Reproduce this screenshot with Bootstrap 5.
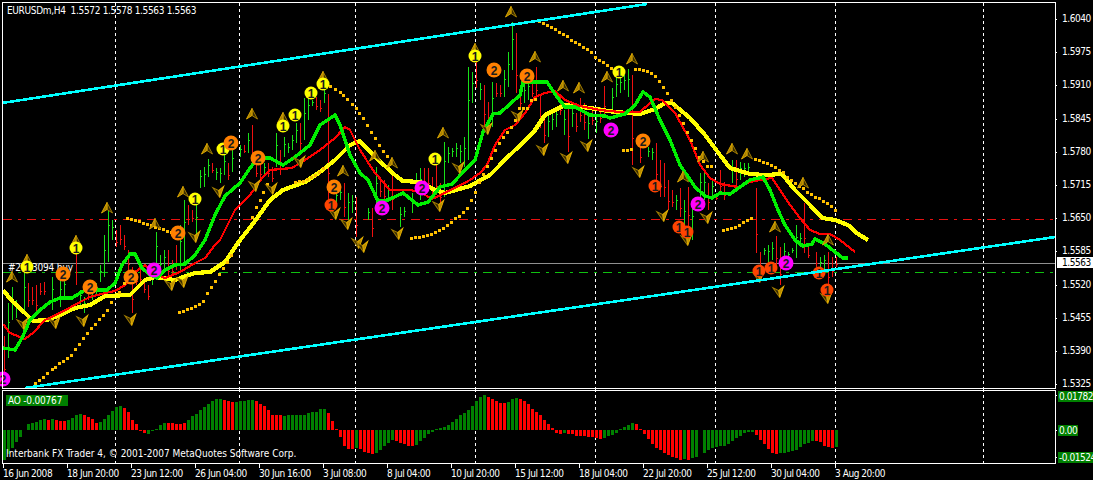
<!DOCTYPE html>
<html lang="en">
<head>
<meta charset="utf-8">
<title>EURUSDm,H4</title>
<link href="https://cdn.jsdelivr.net/npm/bootstrap@5.3.0/dist/css/bootstrap.min.css" rel="stylesheet">
<style>
html,body{margin:0;padding:0;background:#000;overflow:hidden}
.mt4-win{width:1093px;height:480px;background:#000;color:#fff;font-family:"DejaVu Sans Condensed","DejaVu Sans","Liberation Sans",sans-serif;font-stretch:condensed;font-size:10px;line-height:11px;letter-spacing:-.45px;overflow:hidden}
.mt4-win svg{display:block;flex:0 0 1057px}
.pane-main{height:389px}
.pane-ao{height:75px}
.scale-prices{width:36px;padding:13px 0 0 5px;gap:22.2px}
.scale-prices span{height:11px;white-space:nowrap}
.scale-ao{width:36px}
.ao-tag{position:absolute;left:1px;background:#008000;padding:0 1px;height:11px;white-space:nowrap}
.ao-t1{top:2px}.ao-t2{top:36px}.ao-t3{top:63px}
.cur-price{position:absolute;left:1057px;top:257px;width:36px;height:11px;background:#fff;color:#000;padding-left:5px}
.sym-title{position:absolute;left:7px;top:5px;white-space:pre;letter-spacing:-.33px}
.ao-name{position:absolute;left:6px;top:6px;width:62px;height:11px;background:#008000;padding-left:2px;white-space:nowrap;letter-spacing:-.2px}
.copyr{position:absolute;left:6px;top:59px;white-space:nowrap;letter-spacing:0}
.axis-time{padding:4px 0 0 3px;height:16px}
.tick-lbl{flex:0 0 64px;position:relative;white-space:nowrap}
.tick-lbl::before{content:"";position:absolute;left:0;top:-4px;width:1px;height:4px;background:#fff}
.digit{font:700 12px "Liberation Sans",sans-serif;fill:#1c1c1c;text-anchor:middle;letter-spacing:0}
.svg-lbl{fill:#fff;letter-spacing:-.2px}
</style>
</head>
<body>
<div class="mt4-win d-flex flex-column">
  <div class="pane-main d-flex position-relative">
    <svg id="plot" width="1057" height="389" viewBox="0 0 1057 389" aria-label="price chart"></svg>
    <div class="scale-prices d-flex flex-column">
      <span>1.6040</span><span>1.5975</span><span>1.5910</span><span>1.5845</span><span>1.5780</span><span>1.5715</span>
      <span>1.5650</span><span>1.5585</span><span>1.5520</span><span>1.5455</span><span>1.5390</span><span>1.5325</span>
    </div>
    <div class="cur-price">1.5563</div>
    <div class="sym-title">EURUSDm,H4  1.5572 1.5578 1.5563 1.5563</div>
  </div>
  <div class="pane-ao d-flex position-relative">
    <svg id="ao" width="1057" height="75" viewBox="0 0 1057 75" aria-label="AO"></svg>
    <div class="scale-ao position-relative">
      <span class="ao-tag ao-t1">0.01782</span><span class="ao-tag ao-t2">0.00</span><span class="ao-tag ao-t3">-0.01524</span>
    </div>
    <div class="ao-name">AO -0.00767</div>
    <div class="copyr">Interbank FX Trader 4, © 2001-2007 MetaQuotes Software Corp.</div>
  </div>
  <div class="axis-time d-flex">
    <span class="tick-lbl">16 Jun 2008</span><span class="tick-lbl">18 Jun 20:00</span><span class="tick-lbl">23 Jun 12:00</span><span class="tick-lbl">26 Jun 04:00</span><span class="tick-lbl">30 Jun 16:00</span><span class="tick-lbl">3 Jul 08:00</span><span class="tick-lbl">8 Jul 04:00</span><span class="tick-lbl">10 Jul 20:00</span><span class="tick-lbl">15 Jul 12:00</span><span class="tick-lbl">18 Jul 04:00</span><span class="tick-lbl">22 Jul 20:00</span><span class="tick-lbl">25 Jul 12:00</span><span class="tick-lbl">30 Jul 04:00</span><span class="tick-lbl">3 Aug 20:00</span>
  </div>
</div>
<script src="https://cdn.jsdelivr.net/npm/bootstrap@5.3.0/dist/js/bootstrap.bundle.min.js"></script>
<script>
const VX=[115.5,239.5,355.5,475.5,595.5,715.5,835.5,983.5];
const candles=`4 r 336 383;8 g 303 358;12 g 287 320;16 g 300 318;24 g 273 312;28 r 283 307;32 r 287 305;36 r 285 313;40 r 283 295;44 r 282 295;52 g 277 310;60 g 280 307;64 g 275 300;76 r 240 285;80 g 290 305;84 g 297 313;88 r 285 300;92 g 285 300;96 g 283 295;100 g 265 282;104 g 235 277;108 g 205 262;112 g 220 240;116 r 230 247;120 r 225 245;124 r 235 250;128 r 250 270;132 r 267 313;136 r 270 285;140 r 265 285;144 r 280 293;148 r 285 300;152 g 270 285;156 g 232 272;160 g 255 280;164 g 250 270;168 r 250 280;172 r 260 275;176 r 245 270;180 g 225 270;184 g 200 263;188 r 205 225;192 r 210 222;196 g 205 240;200 g 170 188;204 g 167 187;208 g 159 177;212 r 163 173;216 g 168 180;220 g 168 183;224 g 153 175;228 r 163 180;232 g 150 172;240 g 145 157;244 r 145 153;248 g 133 153;252 r 125 163;256 r 163 177;260 r 165 178;264 g 163 175;268 r 163 177;272 r 167 182;276 g 133 167;280 r 150 175;284 g 137 157;288 g 143 153;292 g 135 150;296 g 123 143;300 r 123 152;304 g 98 140;308 g 97 120;312 g 100 106;316 r 97 110;320 r 100 112;324 g 88 103;328 r 94 207;336 g 190 203;340 g 188 200;344 r 183 217;348 g 193 220;352 g 195 213;356 r 197 237;368 g 208 220;372 r 208 237;376 g 167 213;380 r 177 197;384 r 180 203;388 g 185 200;392 r 173 210;400 g 207 227;404 g 207 217;412 g 193 213;416 g 173 193;420 g 168 200;424 r 168 187;428 r 168 190;432 r 177 197;436 r 165 195;440 r 183 203;444 g 142 197;448 g 147 163;452 g 148 157;456 g 143 157;460 g 145 163;464 g 137 167;468 g 67 160;472 g 72 103;476 r 60 88;480 g 83 100;484 r 85 127;488 r 102 123;492 g 82 127;496 r 83 97;500 r 85 97;504 g 70 97;508 g 52 87;512 g 22 70;516 r 33 93;520 r 87 110;524 g 83 103;528 g 78 100;532 r 82 97;536 r 67 100;540 r 95 128;544 r 115 143;548 g 113 137;552 g 113 130;556 g 107 127;560 r 97 115;564 g 110 135;568 r 100 152;572 g 105 127;576 r 113 132;580 r 98 122;584 r 103 130;588 g 115 139;592 r 108 125;596 g 115 133;600 r 107 123;604 r 86 115;612 g 88 113;616 g 77 97;620 g 76 93;624 g 75 90;628 g 69 97;632 r 75 165;640 r 143 163;648 g 147 157;652 g 148 160;656 r 143 187;660 r 160 197;664 r 163 197;668 r 180 210;672 r 190 207;676 g 195 210;680 r 188 217;684 g 200 230;688 r 187 227;692 g 203 240;700 g 173 200;704 g 172 200;708 r 183 210;712 g 180 197;716 r 193 200;720 r 170 193;724 r 182 200;732 g 160 183;736 r 160 187;740 g 162 180;744 g 163 177;748 g 163 173;756 r 188 253;760 r 252 277;764 g 248 255;768 g 245 262;772 g 242 260;776 r 236 267;780 r 247 285;784 g 243 267;788 g 252 258;792 g 248 253;796 g 225 258;800 g 233 247;804 r 203 253;808 r 247 258;816 r 252 267;820 g 257 270;824 g 255 270;828 r 252 287;832 r 257 277;836 r 257 267`;
const yellow="3,290 13,302 25,313 33,321 47,320 60,315 75,308 90,305 105,296 130,295 145,280 155,277 175,280 195,273 210,272 225,262 240,240 252,225 270,200 283,190 305,182 320,172 335,160 350,145 360,141 375,157 395,175 403,181 420,182 435,190 445,193 470,186 490,175 500,165 515,150 533,133 545,115 555,110 565,105 590,108 615,112 640,114 655,109 665,103 672,103 690,118 705,135 720,155 730,168 750,174 765,175 782,174 795,190 810,205 822,218 835,220 848,225 858,234 868,240";
const redma="3,324 10,333 25,339 33,333 45,320 60,313 80,302 90,297 105,293 115,291 125,285 135,272 145,265 155,274 165,278 180,272 195,263 205,258 215,245 220,240 235,210 250,195 262,178 270,170 292,168 305,160 320,150 335,138 345,127 350,130 360,150 375,173 390,190 410,190 420,192 432,199 445,193 470,180 480,173 487,165 495,145 505,130 515,125 525,113 535,97 545,93 555,91 565,100 580,106 600,110 620,112 640,112 650,103 655,99 662,100 675,113 690,140 700,165 710,178 720,184 738,187 750,182 765,179 772,178 780,190 790,205 800,218 810,230 820,234 830,234 840,240 850,248 855,252";
const greenma="3,348 15,350 22,338 30,320 40,310 50,302 60,298 72,298 85,290 95,290 107,290 115,283 122,265 130,254 135,254 142,268 150,275 157,278 165,270 175,265 185,264 195,255 205,240 215,215 225,196 240,183 250,168 258,158 270,158 283,165 295,157 310,145 320,125 335,115 340,125 350,155 360,173 368,180 378,201 388,200 403,193 418,205 428,202 440,187 452,184 465,170 475,160 483,132 493,114 500,113 510,104 520,95 523,82 533,82 547,82 557,97 565,107 575,107 590,115 605,116 610,118 625,114 635,105 643,92 650,97 660,120 670,140 680,165 695,187 705,196 712,198 720,193 730,194 740,187 750,180 763,177 770,190 778,210 785,225 795,240 803,246 812,244 815,239 825,244 835,252 843,258 848,258";
function zoomPts(ox,oy,s){return s.trim().split(/\s+/).map(p=>{const[a,b]=p.split(',').map(Number);return[ox+a/3,oy+b/3]})}
const dots=[].concat(
 zoomPts(0,0,"990,258 1005,268 1020,277 1030,285 1042,297 1055,311 1067,323 1078,338"),
 zoomPts(360,0,"10,353 22,375 33,395 45,415 57,435 70,452 82,468 92,482"),
 zoomPts(0,240,"105,430 118,420 130,410 142,398 155,388 166,380 178,370 190,363 202,355 214,345 226,328 238,312 250,295 262,280 274,265 286,252 298,237 310,225 322,210 334,185 358,155 372,130"),
 zoomPts(0,0,"381,654 393,657 405,660 417,664 429,668 441,672 453,676 465,680 477,683 489,688 501,692 513,697 525,703"),
 zoomPts(0,240,"538,215 550,213 562,208 574,205 586,198 598,193 610,183 622,160 634,142 646,122 658,102 670,85 682,65 694,45"),
 zoomPts(0,0,"755,650 767,622 779,600 790,575 802,553 885,545 897,543 909,543 921,538 933,530 945,525 957,515 969,505"),
 zoomPts(360,0,"153,715 165,712 177,710 189,707 201,705 213,702 225,695 237,690 249,683 261,674 273,665 285,653 297,648 309,635 321,623 333,600 345,577 357,545 369,522 381,497 393,475 405,450 417,428 429,410 441,395 453,380 465,360 477,325 489,325 501,325 513,300 525,297 537,62 549,68 561,75 573,82 585,88 597,95 609,101 621,108 633,120 645,127 657,133 669,140 681,148 693,156 705,170 717,180 729,186 741,195 753,205 825,208 837,208 849,210 861,213 873,218 885,228 897,243 909,260 921,280 933,300 945,320 957,345 969,370 981,395 993,420 1005,445 1017,470 1029,483 1041,497 1053,498 790,450 802,450 814,447"),
 zoomPts(720,120,"10,330 22,327 34,324 46,320 58,314 70,307 82,300 94,293 105,117 118,121 130,125 142,130 154,135 166,142 178,150 190,157 202,172 214,180 226,188 238,198 250,205 262,215 274,222 286,230 298,233 310,243 322,248 334,258 346,270")
);
const ups=[[107,208],[76,241],[155,224],[183,192],[207,149],[252,114],[283,118],[323,77],[343,171],[27,260],[12,277],[475,49],[511,12],[535,57],[563,86],[579,88],[607,77],[632,59],[443,133],[375,156],[392,163],[683,177],[703,157],[732,149],[747,154],[803,183],[775,227],[828,240]];
const downs=[[195,237],[219,192],[255,186],[272,189],[300,162],[335,214],[347,224],[23,324],[55,323],[83,321],[131,320],[171,285],[183,282],[358,243],[398,234],[363,247],[439,206],[459,168],[487,129],[518,116],[543,150],[567,158],[587,146],[639,172],[663,216],[707,218],[687,240],[779,292],[827,298],[759,277]];
const circles=[
 ["#ffff00",6.5,"1",[[195,199],[223,149],[283,126],[295,115],[311,93],[323,84],[76,248],[27,267],[475,56],[435,159],[619,72]]],
 ["#ff8000",7.5,"2",[[231,143],[258,158],[334,187],[178,233],[63,274],[90,287],[131,277],[494,70],[527,76],[643,141]]],
 ["#ff00ff",7.5,"2",[[154,270],[3,379],[382,208],[422,188],[611,130],[698,204],[786,263]]],
 ["#ff4400",6.5,"1",[[331,205],[655,186],[679,227],[687,232],[759,271],[771,268],[819,273],[827,290]]]
];
let h='';
VX.forEach(x=>h+=`<line x1="${x}" y1="3" x2="${x}" y2="389" stroke="#fff" stroke-dasharray="3 3" shape-rendering="crispEdges"/>`);
h+=`<line x1="3" y1="219.5" x2="1055" y2="219.5" stroke="#e81010" stroke-dasharray="9 6 3 6" shape-rendering="crispEdges"/>`;
h+=`<line x1="3" y1="272.5" x2="1055" y2="272.5" stroke="#10c010" stroke-dasharray="9 6 3 6" shape-rendering="crispEdges"/>`;
h+=`<line x1="3" y1="263.5" x2="1055" y2="263.5" stroke="#909090" shape-rendering="crispEdges"/>`;
h+=`<text class="svg-lbl" x="8" y="271">#2133094 buy</text>`;
candles.split(';').forEach(s=>{const p=s.trim().split(' ');const x=+p[0]+.5,c=p[1]=='g'?'#18e018':'#f01010',a=+p[2],b=+p[3],t=Math.round(a+(b-a)*.35)+.5,o=Math.round(a+(b-a)*.7)+.5;
 h+=`<path d="M${x} ${a}V${b}M${x-1} ${p[1]=='g'?o:t}H${x}M${x} ${p[1]=='g'?t:o}H${x+1}" stroke="${c}" fill="none" shape-rendering="crispEdges"/>`;});
[[yellow,'#ffff00',4.2],[redma,'#ff0000',2.2],[greenma,'#00f000',3.4]].forEach(m=>h+=`<polyline points="${m[0]}" fill="none" stroke="${m[1]}" stroke-width="${m[2]}" stroke-linejoin="round" shape-rendering="crispEdges"/>`);
dots.forEach(d=>h+=`<rect x="${Math.round(d[0])-1.5}" y="${Math.round(d[1])-1.5}" width="3" height="3" fill="#ffc000" shape-rendering="crispEdges"/>`);
ups.forEach(a=>h+=`<g transform="translate(${a[0]} ${a[1]})"><path d="M0-5.5 5.5 5 0 1.5Z" fill="#3a2c00" stroke="#a07c00"/><path d="M0-5.5-5.5 5 0 1.5Z" fill="#a88000" stroke="#d8a400"/></g>`);
downs.forEach(a=>h+=`<g transform="translate(${a[0]} ${a[1]}) rotate(-8)"><path d="M0 5.5-5.5-5 0-1.5Z" fill="#3a2c00" stroke="#a07c00"/><path d="M0 5.5 5.5-5 0-1.5Z" fill="#b88c00" stroke="#e0ac00"/></g>`);
circles.forEach(c=>c[3].forEach(p=>h+=`<circle cx="${p[0]}" cy="${p[1]}" r="${c[1]}" fill="${c[0]}"/><text class="digit" x="${p[0]}" y="${p[1]+4.5}">${c[2]}</text>`));
h+=`<polyline points="2,103 647,4" fill="none" stroke="#00ffff" stroke-width="2.6" shape-rendering="crispEdges"/>`;
h+=`<polyline points="25,388 1055,237" fill="none" stroke="#00ffff" stroke-width="2.6" shape-rendering="crispEdges"/>`;
h+=`<path d="M2.5 388V2.5H1055.5V388" fill="none" stroke="#fff" shape-rendering="crispEdges"/><path d="M2 388.5H1056" stroke="#fff" shape-rendering="crispEdges"/>`;
for(let i=0;i<12;i++){const y=Math.round(19+i*33.2)+.5;h+=`<path d="M1056 ${y}H1059" stroke="#fff" shape-rendering="crispEdges"/>`;}
document.getElementById('plot').innerHTML=h;

const A=[], put=(start,str)=>str.trim().split(/\s+/).forEach((t,k)=>{A[start+k]=[t[0],+t.slice(1)]});
put(0,"g-30 g-24 g-18 g-12 g-7 g0.5 g6 g7 g8 g10 g11 r10 g11 r10 r9 r9 g10 g12 g15 g16 r15 r13 r11 r7 g8 g11 g15 g19 g23 g24 r22 r18 r10 r6 r-1 r-3 g-4 g-1 g1 g5 g7 r7 r7 r6 r6 r7 g10 g14 g16 g20 g23 g26 g29 g31 g31 r30 r29 r28 g28 g29 g29 g30 g30 r29 r26 r24 r20 r15 r15 r15 g14 g15 g15 g15 g15 g15 g17 g18 g18 g21 g21 r17 r9 r1 r-7 r-16 r-19 r-19 g-18");
put(89,"r-19 r-22 r-23 r-24 g-23 g-20 g-16 g-13 g-10 r-11 r-13 r-14 r-16 r-16 g-15 g-11 g-8 g-4 g-2 g1 g2 g3 g5 g8 g11 g15 g17 g20 g24 g29 g33 g35 r33 r31 r29 r27 r27 g28 g31 g32 r31 r29 r26 r21 r18 r15 r10 r6 r2 r-3 r-4 g-3 r-4 r-4 r-6 r-6 r-6 r-7 r-7 r-8 r-9 g-8 g-6 g-5 g-3 g1 g3 g5 g7 r6 r1 r-4 r-9 r-14 r-18 r-20 r-23 r-25 r-27 r-28 r-30 g-29 r-30 g-28 g-27");
put(175,"g-23 g-20 g-18 g-17 g-16 g-16 g-14 g-11 g-8 g-6 g-3 g-2 g-2 r-5 r-10 r-14 r-19 r-23 r-24 g-23 g-23 g-22 g-21 g-20 g-17 g-14 g-13 g-11 r-11 r-12 r-16 r-17 r-18 g-17");
let g='';
VX.forEach(x=>g+=`<line x1="${x}" y1="0" x2="${x}" y2="74" stroke="#fff" stroke-dasharray="3 3" shape-rendering="crispEdges"/>`);
A.forEach((b,i)=>{if(!b)return;const v=b[1],y=v>=0?41-v:41,hh=Math.abs(v)||.5;g+=`<rect x="${3+4*i}" y="${y}" width="3" height="${hh}" fill="${b[0]=='g'?'#008000':'#ff0000'}" shape-rendering="crispEdges"/>`;});
g+=`<path d="M2.5 1.5H1055.5V74.5H2.5Z" fill="none" stroke="#fff" shape-rendering="crispEdges"/>`;
[6,41,68].forEach(y=>g+=`<path d="M1056 ${y+.5}H1059" stroke="#fff" shape-rendering="crispEdges"/>`);
document.getElementById('ao').innerHTML=g;
</script>
</body>
</html>
